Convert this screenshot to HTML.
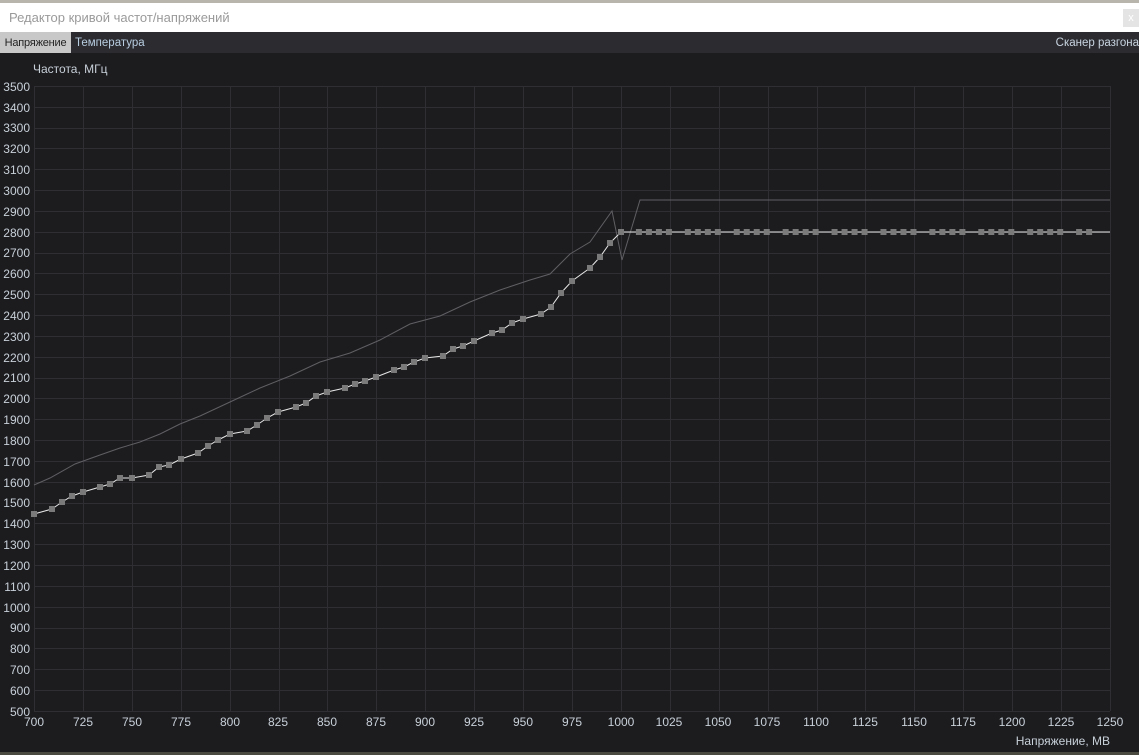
<!DOCTYPE html>
<html><head><meta charset="utf-8"><style>
body{margin:0;width:1139px;height:755px;overflow:hidden;background:#1c1c1f;font-family:"Liberation Sans","DejaVu Sans",sans-serif;position:relative}
.top{position:absolute;left:0;top:0;width:1139px;height:3px;background:#b8b6ac}
.title{position:absolute;left:0;top:3px;width:1139px;height:29px;background:#fff;color:#9a9a9a;font-size:13px;line-height:29px;text-indent:9px}
.close{position:absolute;right:0;top:6px;width:16px;height:18px;background:#e4e4e4;color:#fff;font-size:11px;text-align:center;line-height:18px;text-indent:0}
.tabs{position:absolute;left:0;top:32px;width:1139px;height:21px;background:#2b2b30;font-size:11.5px;line-height:23px}
.t1{position:absolute;left:0;top:0;width:71px;height:21px;background:#c8c8c8;color:#222;text-align:center;font-size:11px;letter-spacing:-0.2px}
.t2{position:absolute;left:75px;top:0;color:#b8cde0}
.t3{position:absolute;right:0;top:0;color:#c8d4e0}
.bot{position:absolute;left:0;top:752px;width:1139px;height:3px;background:#4a4a40}
svg{position:absolute;left:0;top:53px}
svg text{font-family:"Liberation Sans",sans-serif;font-size:12px;fill:#c8d0d8}
</style></head><body>
<div class="top"></div>
<div class="title">Редактор кривой частот/напряжений<div class="close">x</div></div>
<div class="tabs"><div class="t1">Напряжение</div><div class="t2">Температура</div><div class="t3">Сканер разгона</div></div>
<svg id="s" width="1139" height="699" viewBox="0 53 1139 699">
<text x="33" y="73">Частота, МГц</text>
<g id="grid" stroke="#2f2f33" stroke-width="1"></g>
<g text-anchor="end">
<text x="30" y="91">3500</text><text x="30" y="112">3400</text><text x="30" y="132">3300</text><text x="30" y="153">3200</text><text x="30" y="174">3100</text><text x="30" y="195">3000</text><text x="30" y="216">2900</text><text x="30" y="237">2800</text><text x="30" y="257">2700</text><text x="30" y="278">2600</text><text x="30" y="299">2500</text><text x="30" y="320">2400</text><text x="30" y="341">2300</text><text x="30" y="362">2200</text><text x="30" y="382">2100</text><text x="30" y="403">2000</text><text x="30" y="424">1900</text><text x="30" y="445">1800</text><text x="30" y="466">1700</text><text x="30" y="487">1600</text><text x="30" y="507">1500</text><text x="30" y="528">1400</text><text x="30" y="549">1300</text><text x="30" y="570">1200</text><text x="30" y="591">1100</text><text x="30" y="612">1000</text><text x="30" y="632">900</text><text x="30" y="653">800</text><text x="30" y="674">700</text><text x="30" y="695">600</text><text x="30" y="716">500</text>
</g>
<g text-anchor="middle">
<text x="34" y="726">700</text><text x="83" y="726">725</text><text x="132" y="726">750</text><text x="181" y="726">775</text><text x="230" y="726">800</text><text x="278" y="726">825</text><text x="327" y="726">850</text><text x="376" y="726">875</text><text x="425" y="726">900</text><text x="474" y="726">925</text><text x="523" y="726">950</text><text x="572" y="726">975</text><text x="621" y="726">1000</text><text x="669" y="726">1025</text><text x="718" y="726">1050</text><text x="767" y="726">1075</text><text x="816" y="726">1100</text><text x="865" y="726">1125</text><text x="914" y="726">1150</text><text x="963" y="726">1175</text><text x="1012" y="726">1200</text><text x="1061" y="726">1225</text><text x="1110" y="726">1250</text>
</g>
<text x="1110" y="745" text-anchor="end">Напряжение, МВ</text>
<polyline fill="none" stroke="#606064" stroke-width="1" points="34,485 50,478 75,464 100,455 120,448 140,442 160,434 180,424 200,416 230,402 260,388 290,376 320,362 350,353 380,340 410,324 440,316 470,302 500,290 530,280 550,274 570,254 590,242 612,211 622,260 640,200 1110,200"/>
<polyline id="wl" fill="none" stroke="#e8e8e8" stroke-width="1"/>
<g id="mk" fill="#7a7a7a"></g>
</svg>
<div class="bot"></div>
<script>
var ns="http://www.w3.org/2000/svg",g=document.getElementById('grid');
function ln(a,b,c,d){var l=document.createElementNS(ns,'line');l.setAttribute('x1',a);l.setAttribute('y1',b);l.setAttribute('x2',c);l.setAttribute('y2',d);g.appendChild(l);}
for(var k=0;k<=22;k++){var x=Math.round(34+k*48.91)+0.5;ln(x,86,x,711);}
for(var j=0;j<=30;j++){var y=Math.round(86+j*20.833)+0.5;ln(34,y,1110,y);}
var P=[[34,514],[52,509],[62,502],[72,496],[83,492],[100,487],[110,484],[120,478],[132,478],[149,475],[159,467],[169,465],[181,459],[198,453],[208,446],[218,440],[230,434],[247,431],[257,425],[267,418],[278,412],[296,407],[306,403],[316,396],[327,392],[345,388],[355,384],[365,381],[376,377],[394,370],[404,367],[414,362],[425,358],[443,356],[453,349],[463,346],[474,341],[492,333],[502,330],[512,323],[523,319],[541,314],[551,307],[561,293],[572,281],[590,268],[600,257],[610,243],[621,232]];
var pts=P.slice();
for(var k=12;k<22;k++){var gx=34+k*48.91;[18,28,38,48].forEach(function(o){var x=gx+o;if(x<1095)pts.push([x,232]);});}
var s="";P.forEach(function(p){s+=p[0]+","+p[1]+" ";});s+="1110,232";
document.getElementById('wl').setAttribute('points',s);
var m=document.getElementById('mk');
pts.forEach(function(p){var r=document.createElementNS(ns,'rect');r.setAttribute('x',p[0]-3);r.setAttribute('y',p[1]-3);r.setAttribute('width',6);r.setAttribute('height',6);m.appendChild(r);});
</script>
</body></html>
